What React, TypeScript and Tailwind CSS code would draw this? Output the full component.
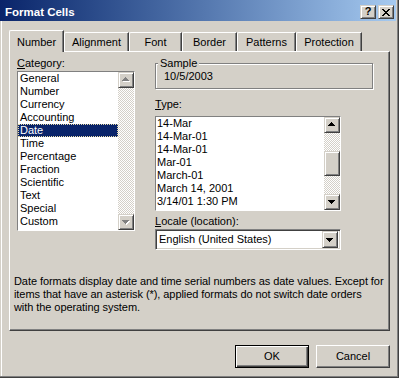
import React from 'react';

const raised =
  "border border-t-[#d4d0c8] border-l-[#d4d0c8] border-r-[#404040] border-b-[#404040] shadow-[inset_1px_1px_0_#ffffff,inset_-1px_-1px_0_#808080] bg-[#d4d0c8]";
const sunken =
  "border border-t-[#808080] border-l-[#808080] border-r-white border-b-white shadow-[inset_1px_1px_0_#404040,inset_-1px_-1px_0_#d4d0c8]";
const dither =
  "[background-image:repeating-conic-gradient(#ffffff_0_25%,#d4d0c8_0_50%)] [background-size:2px_2px]";

function Tri({ dir, disabled }: { dir: 'up' | 'down'; disabled?: boolean }) {
  const rows = dir === 'up' ? [[3, 1], [2, 3], [1, 5], [0, 7]] : [[0, 7], [1, 5], [2, 3], [3, 1]];
  return (
    <svg width="8" height="5" viewBox="0 0 8 5" shapeRendering="crispEdges" className="block">
      {disabled &&
        rows.map(([x, w], i) => <rect key={'s' + i} x={x + 1} y={i + 1} width={w} height={1} fill="#ffffff" />)}
      {rows.map(([x, w], i) => (
        <rect key={i} x={x} y={i} width={w} height={1} fill={disabled ? '#808080' : '#000000'} />
      ))}
    </svg>
  );
}

function ArrowBtn({ dir, disabled }: { dir: 'up' | 'down'; disabled?: boolean }) {
  return (
    <div className={`${raised} w-[16px] h-[16px] flex items-center justify-center shrink-0`}>
      <div className={dir === 'up' ? 'mt-[-1px]' : 'mt-[1px]'}>
        <Tri dir={dir} disabled={disabled} />
      </div>
    </div>
  );
}

function CloseGlyph() {
  const rows = [
    [[0, 2], [6, 2]],
    [[1, 2], [5, 2]],
    [[2, 4]],
    [[3, 2]],
    [[2, 4]],
    [[1, 2], [5, 2]],
    [[0, 2], [6, 2]],
  ];
  return (
    <svg width="8" height="7" viewBox="0 0 8 7" shapeRendering="crispEdges" className="block">
      {rows.map((segs, y) => segs.map(([x, w], j) => <rect key={y + '-' + j} x={x} y={y} width={w} height={1} fill="#000" />))}
    </svg>
  );
}

const categories = [
  'General',
  'Number',
  'Currency',
  'Accounting',
  'Date',
  'Time',
  'Percentage',
  'Fraction',
  'Scientific',
  'Text',
  'Special',
  'Custom',
];

const types = ['14-Mar', '14-Mar-01', '14-Mar-01', 'Mar-01', 'March-01', 'March 14, 2001', '3/14/01 1:30 PM'];

const tabs = [
  { label: 'Number', w: 'w-[55px]', sel: true },
  { label: 'Alignment', w: 'w-[65px]' },
  { label: 'Font', w: 'w-[53px]' },
  { label: 'Border', w: 'w-[55px]' },
  { label: 'Patterns', w: 'w-[59px]' },
  { label: 'Protection', w: 'w-[66px]' },
];

export default function App() {
  return (
    <div className="w-[399px] h-[378px] flex flex-col bg-[#d4d0c8] border-r border-b border-[#404040] font-['Liberation_Sans',Arial,sans-serif] text-[11px] leading-[13px] text-black overflow-hidden select-none">
      <div className="flex-1 flex flex-col border-r border-b border-[#808080] pr-px">
        {/* Title bar */}
        <div className="h-[21px] shrink-0 flex items-start bg-linear-to-r from-[#0a246a] to-[#a6caf0]">
          <div className="mt-[6px] pl-[5px] text-white font-bold text-[11.5px] leading-[13px] flex-1">Format Cells</div>
          <div className="mt-[5px] flex gap-[2px] pr-[2px]">
            <div className={`${raised} w-[16px] h-[14px] flex items-center justify-center`}>
              <span className="font-bold text-[11px] leading-[11px] mt-[-1px]">?</span>
            </div>
            <div className={`${raised} w-[16px] h-[14px] flex items-center justify-center`}>
              <CloseGlyph />
            </div>
          </div>
        </div>

        {/* Body */}
        <div className="flex-1 ml-px border-l border-white pl-[7px] pt-[9px] flex flex-col">
          {/* Tabs */}
          <div className="h-[21px] flex items-end shrink-0">
            {tabs.map((t) =>
              t.sel ? (
                <div
                  key={t.label}
                  className={`relative z-10 -mb-px h-[22px] ${t.w} bg-[#d4d0c8] border-t border-l border-r border-t-white border-l-white border-r-[#404040] rounded-tl-[2px] shadow-[inset_-1px_0_0_#808080] pt-[5px] text-center`}
                >
                  {t.label}
                </div>
              ) : (
                <div
                  key={t.label}
                  className={`h-[19px] ${t.w} bg-[#d4d0c8] border-t border-l border-r border-t-white border-l-white border-r-[#404040] rounded-tl-[2px] shadow-[inset_-1px_0_0_#808080] pt-[3px] text-center`}
                >
                  {t.label}
                </div>
              )
            )}
          </div>

          {/* Panel */}
          <div className="w-[381px] h-[280px] shrink-0 border border-t-white border-l-white border-r-[#404040] border-b-[#404040] shadow-[inset_-1px_-1px_0_#808080] flex flex-col">
            <div className="flex pl-[7px] pt-[5px]">
              {/* Category column */}
              <div className="w-[118px] flex flex-col">
                <div className="h-[13px]">
                  <span className="underline underline-offset-[1px]">C</span>ategory:
                </div>
                <div className={`${sunken} mt-px h-[160px] flex`}>
                  <div className="flex-1 bg-white flex flex-col">
                    {categories.map((c) =>
                      c === 'Date' ? (
                        <div
                          key={c}
                          className="h-[13px] pl-[2px] bg-[#0a246a] text-white outline outline-1 outline-dotted -outline-offset-1 outline-[#e8dca8]"
                        >
                          {c}
                        </div>
                      ) : (
                        <div key={c} className="h-[13px] pl-[2px]">
                          {c}
                        </div>
                      )
                    )}
                  </div>
                  <div className="w-[16px] flex flex-col">
                    <ArrowBtn dir="up" disabled />
                    <div className={`flex-1 ${dither}`} />
                    <ArrowBtn dir="down" disabled />
                  </div>
                </div>
              </div>

              {/* Right column */}
              <div className="ml-[20px] flex flex-col">
                <div className="mt-[6px] w-[218px] h-[26px] border border-[#808080] shadow-[inset_1px_1px_0_#ffffff,1px_1px_0_#ffffff] pl-[8px]">
                  <div className="-mt-[7px] ml-[-6px] w-fit px-[2px] bg-[#d4d0c8] h-[13px]">Sample</div>
                  <div className="h-[13px]">10/5/2003</div>
                </div>

                <div className="mt-[9px] h-[13px]">
                  <span className="underline underline-offset-[1px]">T</span>ype:
                </div>
                <div className={`${sunken} mt-[5px] w-[186px] h-[95px] flex`}>
                  <div className="flex-1 bg-white flex flex-col">
                    {types.map((t, i) => (
                      <div key={i} className="h-[13px] pl-[1px] whitespace-nowrap">
                        {t}
                      </div>
                    ))}
                  </div>
                  <div className="w-[16px] flex flex-col">
                    <ArrowBtn dir="up" />
                    <div className={`h-[18px] ${dither}`} />
                    <div className={`${raised} h-[25px]`} />
                    <div className={`flex-1 ${dither}`} />
                    <ArrowBtn dir="down" />
                  </div>
                </div>

                <div className="mt-[4px] h-[13px]">
                  <span className="underline underline-offset-[1px]">L</span>ocale (location):
                </div>
                <div className={`${sunken} mt-[1px] w-[186px] h-[21px] flex items-center bg-white pl-[2px] pr-[2px]`}>
                  <div className="flex-1 pl-[1px] whitespace-nowrap">English (United States)</div>
                  <div className={`${raised} w-[16px] h-[17px] flex items-center justify-center`}>
                    <div className="mt-[1px]">
                      <Tri dir="down" />
                    </div>
                  </div>
                </div>
              </div>
            </div>

            <div className="mt-[25px] pl-[4px] whitespace-nowrap tracking-[-0.07px]">
              Date formats display date and time serial numbers as date values. Except for
              <br />
              items that have an asterisk (*), applied formats do not switch date orders
              <br />
              with the operating system.
            </div>
          </div>

          {/* Buttons */}
          <div className="mt-[14px] w-[381px] flex justify-end gap-[7px]">
            <div className="w-[74px] h-[23px] border border-black shadow-[inset_1px_1px_0_#ffffff,inset_-1px_-1px_0_#404040,inset_-2px_-2px_0_#808080] flex items-center justify-center">
              OK
            </div>
            <div className="w-[74px] h-[23px] border border-t-white border-l-white border-r-[#404040] border-b-[#404040] shadow-[inset_-1px_-1px_0_#808080] flex items-center justify-center">
              Cancel
            </div>
          </div>
        </div>
      </div>
    </div>
  );
}
